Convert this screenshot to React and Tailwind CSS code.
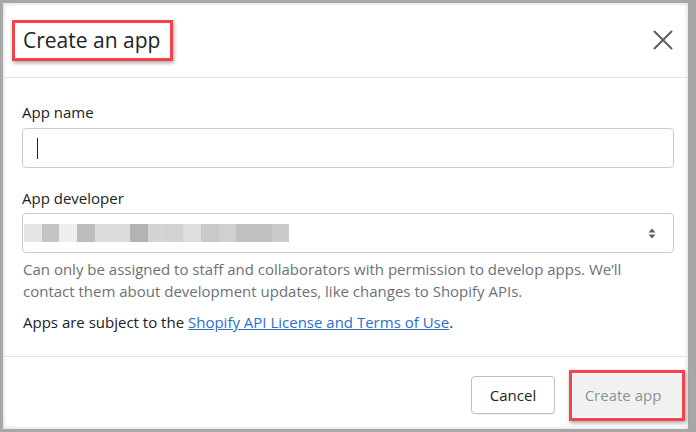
import React from "react";

const blocks = ["#e6e6e6","#c4c4c4","#efefef","#bdbdbd","#dcdcdc","#dcdcdc","#b3b3b3","#d4d4d4","#d2d2d2","#dedede","#c9c9c9","#d0d0d0","#c0c0c0","#c0c0c0","#cbcbcb"];

export default function App() {
  return (
    <div className="w-[696px] h-[432px] bg-[#a7a7a7] pt-[3px] pl-[3px] pr-[8px] pb-[3px] overflow-hidden" style={{fontFamily: '"Open Sans", "Noto Sans", sans-serif'}}>
      <div className="w-full h-full bg-white flex flex-col shadow-[inset_0_0_5px_rgba(0,0,0,0.18)]">
        <div className="h-[75px] shrink-0 flex items-center justify-between pl-[9px] pr-[14px] border-b border-[#e1e3e5]">
          <div className="h-[41px] w-[161px] border-[3px] border-[#f4444a] shadow-[1px_2px_4px_rgba(0,0,0,0.35)] flex items-center pl-[8px]">
            <span className="text-[21px] text-[#202223] leading-none">Create an app</span>
          </div>
          <svg width="20" height="20" viewBox="0 0 20 20" className="mr-[1px]">
            <path d="M1.5 1.5 L18.5 18.5 M18.5 1.5 L1.5 18.5" stroke="#5c5f62" strokeWidth="2" strokeLinecap="round" />
          </svg>
        </div>
        <div className="flex-1 pl-[19px] pr-[14px] pt-[24px] text-[#202223] text-[15px]">
          <div className="leading-[20px] h-[20px]">App name</div>
          <div className="mt-[6px] h-[40px] border border-[#c9cccf] rounded-[4px] flex items-center pl-[14px]">
            <div className="w-[1px] h-[21px] bg-[#202223]" />
          </div>
          <div className="mt-[20px] leading-[20px] h-[20px]">App developer</div>
          <div className="mt-[5px] h-[40px] border border-[#c9cccf] rounded-[4px] flex items-center justify-between pl-[1px] pr-[17px]">
            <div className="flex h-[18px]">
              {blocks.map((c, i) => (
                <div key={i} className="w-[17.7px] h-full" style={{background: c}} />
              ))}
            </div>
            <svg width="8" height="11" viewBox="0 0 8 11">
              <path d="M4 0.5 L7.5 4.5 L0.5 4.5 Z M4 10.5 L7.5 6.5 L0.5 6.5 Z" fill="#5c5f62" />
            </svg>
          </div>
          <p className="mt-[5px] leading-[22px] text-[#6d7175] pl-[1px]">
            Can only be assigned to staff and collaborators with permission to develop apps. We’ll contact them about development updates, like changes to Shopify APIs.
          </p>
          <p className="mt-[9px] leading-[22px] pl-[1px]">
            Apps are subject to the <span className="text-[#2c6ecb] underline">Shopify API License and Terms of Use</span>.
          </p>
        </div>
        <div className="h-[73px] shrink-0 border-t border-[#e1e3e5] flex items-center justify-end pr-[3px] pt-[4px] gap-[14px]">
          <button className="h-[38px] w-[84px] border border-[#babfc3] rounded-[4px] bg-white text-[15px] text-[#202223] shadow-[0_1px_0_rgba(0,0,0,0.05)]">Cancel</button>
          <div className="h-[51px] w-[116px] border-[3px] border-[#f4444a] shadow-[1px_2px_4px_rgba(0,0,0,0.35)] flex p-[1px]">
            <div className="flex-1 bg-[#f1f1f1] rounded-[4px] flex items-center justify-center pr-[8px] text-[15px] text-[#8c9196]">Create app</div>
          </div>
        </div>
      </div>
    </div>
  );
}
